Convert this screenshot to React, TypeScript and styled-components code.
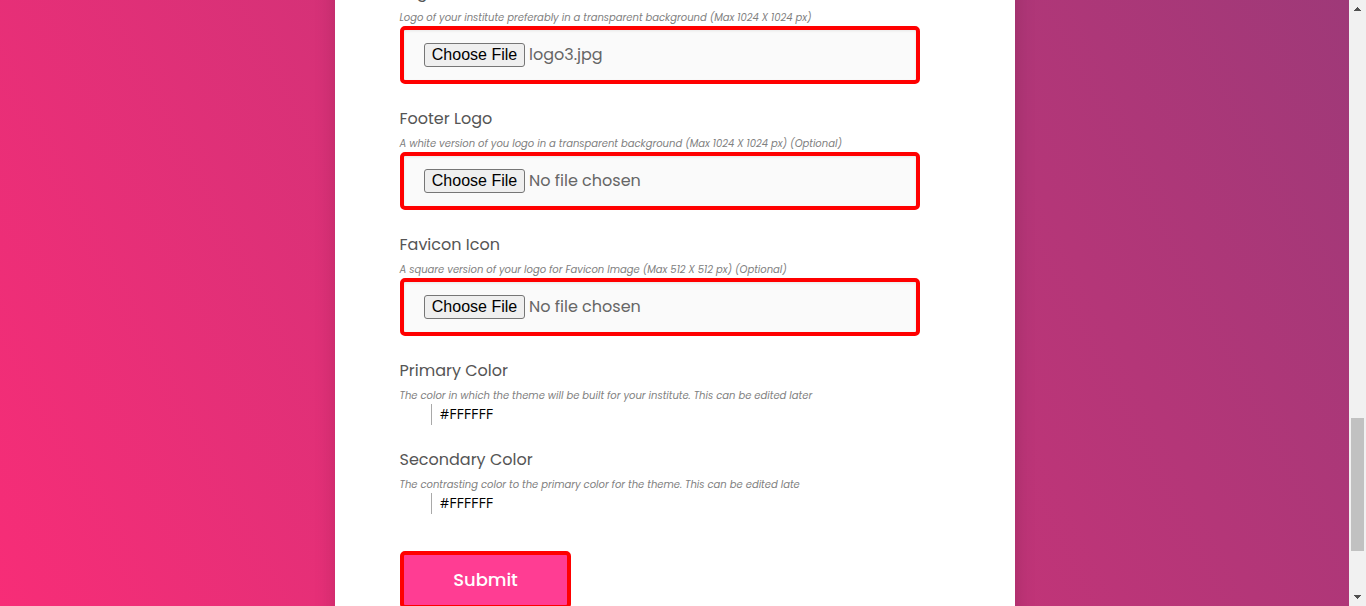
import React from "react";
import styled, { createGlobalStyle } from "styled-components";

const Global = createGlobalStyle`
  * { box-sizing: border-box; }
  html, body { margin: 0; height: 606px; overflow: hidden; }
  body { font-family: Poppins, Inter, "Liberation Sans", sans-serif; color: #555; }
`;

const Page = styled.div`
  display: flex;
  width: 1366px;
  height: 606px;
  overflow: hidden;
`;

const Backdrop = styled.main`
  width: 1349px;
  padding-left: 335px;
  overflow: hidden;
  background: linear-gradient(to top right, #fc2c77 0%, #6c4079 100%) 0 -1827px / 1349px 2606px no-repeat;
`;

const Card = styled.form`
  width: 680px;
  height: 720px;
  margin-top: -62px;
  padding: 40px 95px 0 64.5px;
  background: #fff;
  box-shadow: 0 8px 20px rgba(0, 0, 0, 0.15);
`;

const Field = styled.section<{ $height: number }>`
  height: ${(p) => p.$height}px;
`;

const Label = styled.label`
  display: block;
  height: 29px;
  line-height: 30px;
  font-size: 16px;
  white-space: nowrap;
`;

const Hint = styled.p`
  margin: 0;
  height: 19px;
  line-height: 21px;
  font-size: 10px;
  font-style: italic;
  color: #808080;
  white-space: nowrap;
`;

const FileBox = styled.div`
  display: flex;
  align-items: center;
  gap: 4px;
  width: 520px;
  height: 58px;
  margin-left: 0.5px;
  padding: 0 20px 1px;
  border: 4px solid #f00;
  border-radius: 5px;
  background: #fafafa;
  box-shadow: inset 0 1px 3px rgba(0, 0, 0, 0.08);
`;

const ChooseButton = styled.button`
  width: 101px;
  height: 24px;
  padding: 0;
  border: 1px solid #767676;
  border-radius: 3px;
  background: #efefef;
  color: #000;
  font: 16px/20px "Liberation Sans", Arial, sans-serif;
`;

const FileName = styled.span`
  font-size: 16px;
  line-height: 24px;
  color: #666;
`;

const ColorValue = styled.div`
  width: 80px;
  height: 21px;
  margin-left: 31.5px;
  padding-left: 8px;
  border-left: 1px solid #a9a9a9;
  color: #000;
  font: 14px/20px "Open Sans", "Noto Sans", sans-serif;
  letter-spacing: 0.1px;
`;

const Submit = styled.button`
  display: block;
  width: 171px;
  height: 58px;
  margin-left: 0.5px;
  padding: 0;
  border: 4px solid #f00;
  border-radius: 5px;
  background: #ff3d93;
  color: #fff;
  font: 500 18px/50px Poppins, Inter, sans-serif;
  letter-spacing: -0.1px;
`;

const Scrollbar = styled.aside`
  display: flex;
  flex-direction: column;
  align-items: center;
  width: 17px;
  height: 606px;
  background: #f1f1f1;
`;

const Thumb = styled.div`
  width: 13px;
  height: 133px;
  margin: 401px 0 38px;
  background: #c1c1c1;
`;

const Arrow = ({ down = false }: { down?: boolean }) => (
  <svg width="17" height="17" viewBox="0 0 17 17" shapeRendering="crispEdges">
    <path d={down ? "M5 6h7v1h-1v1h-1v1h-1v1H8v-1H7V8H6V7H5z" : "M8 7h1v1h1v1h1v1h1v1H5v-1h1V9h1V8h1z"} fill="#505050" />
  </svg>
);

const files = [
  { label: "Logo", hint: "Logo of your institute preferably in a transparent background (Max 1024 X 1024 px)", file: "logo3.jpg" },
  { label: "Footer Logo", hint: "A white version of you logo in a transparent background (Max 1024 X 1024 px) (Optional)", file: "No file chosen" },
  { label: "Favicon Icon", hint: "A square version of your logo for Favicon Image (Max 512 X 512 px) (Optional)", file: "No file chosen" },
];

const colors = [
  { label: "Primary Color", hint: "The color in which the theme will be built for your institute. This can be edited later", height: 89 },
  { label: "Secondary Color", hint: "The contrasting color to the primary color for the theme. This can be edited late", height: 106 },
];

export default function App() {
  return (
    <>
      <Global />
      <Page>
        <Backdrop>
          <Card onSubmit={(e) => e.preventDefault()}>
            {files.map((f) => (
              <Field key={f.label} $height={126}>
                <Label>{f.label}</Label>
                <Hint>{f.hint}</Hint>
                <FileBox>
                  <ChooseButton type="button">Choose File</ChooseButton>
                  <FileName>{f.file}</FileName>
                </FileBox>
              </Field>
            ))}
            {colors.map((c) => (
              <Field key={c.label} $height={c.height}>
                <Label>{c.label}</Label>
                <Hint>{c.hint}</Hint>
                <ColorValue>#FFFFFF</ColorValue>
              </Field>
            ))}
            <Submit>Submit</Submit>
          </Card>
        </Backdrop>
        <Scrollbar>
          <Arrow />
          <Thumb />
          <Arrow down />
        </Scrollbar>
      </Page>
    </>
  );
}
